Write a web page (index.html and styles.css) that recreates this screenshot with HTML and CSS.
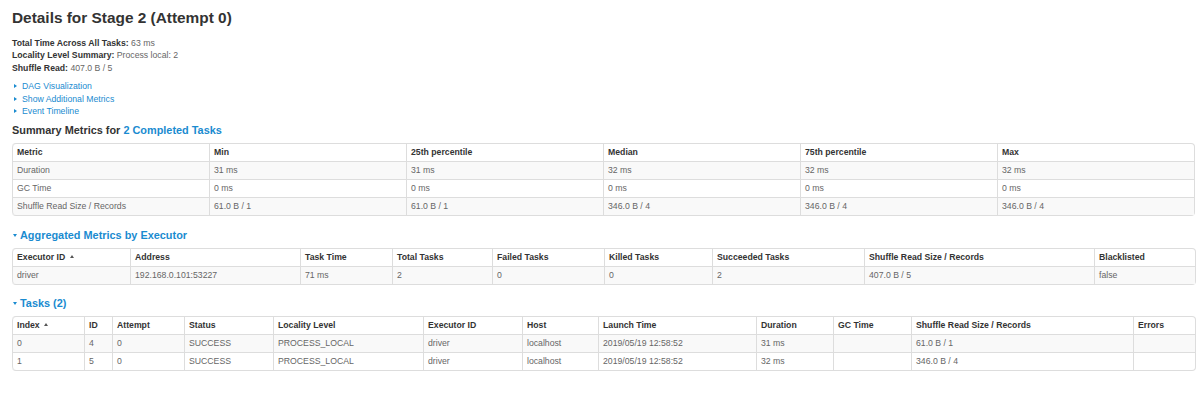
FILE: index.html
```html
<!DOCTYPE html>
<html>
	<head>
		<title>Details for Stage 2 (Attempt 0)</title>
		<link rel="stylesheet" href="styles.css">
	</head>
	<body>
		<div class="container">
			<h3 class="title">Details for Stage 2 (Attempt 0)</h3>
			<ul class="summary">
				<li><strong>Total Time Across All Tasks:</strong> 63 ms</li>
				<li><strong>Locality Level Summary:</strong> Process local: 2</li>
				<li><strong>Shuffle Read:</strong> 407.0 B / 5</li>
			</ul>
			<ul class="toggles">
				<li><span class="arrow-right"></span><a href="javascript:void(0);">DAG Visualization</a></li>
				<li><span class="arrow-right"></span><a href="javascript:void(0);">Show Additional Metrics</a></li>
				<li><span class="arrow-right"></span><a href="javascript:void(0);">Event Timeline</a></li>
			</ul>

			<h4 class="first">Summary Metrics for <a href="javascript:void(0);">2 Completed Tasks</a></h4>
			<table class="table metrics">
				<thead>
					<tr><th>Metric</th><th>Min</th><th>25th percentile</th><th>Median</th><th>75th percentile</th><th>Max</th></tr>
				</thead>
				<tbody>
					<tr><td>Duration</td><td>31 ms</td><td>31 ms</td><td>32 ms</td><td>32 ms</td><td>32 ms</td></tr>
					<tr><td>GC Time</td><td>0 ms</td><td>0 ms</td><td>0 ms</td><td>0 ms</td><td>0 ms</td></tr>
					<tr><td>Shuffle Read Size / Records</td><td>61.0 B / 1</td><td>61.0 B / 1</td><td>346.0 B / 4</td><td>346.0 B / 4</td><td>346.0 B / 4</td></tr>
				</tbody>
			</table>

			<h4 class="collapse agg"><span class="arrow-down"></span><a href="javascript:void(0);">Aggregated Metrics by Executor</a></h4>
			<table class="table executors">
				<colgroup>
					<col class="c118"><col class="c170"><col class="c92"><col class="c100"><col class="c112"><col class="c108"><col class="c152"><col class="c230"><col class="c101">
				</colgroup>
				<thead>
					<tr><th>Executor ID <span class="sort"></span></th><th>Address</th><th>Task Time</th><th>Total Tasks</th><th>Failed Tasks</th><th>Killed Tasks</th><th>Succeeded Tasks</th><th>Shuffle Read Size / Records</th><th>Blacklisted</th></tr>
				</thead>
				<tbody>
					<tr><td>driver</td><td>192.168.0.101:53227</td><td>71 ms</td><td>2</td><td>0</td><td>0</td><td>2</td><td>407.0 B / 5</td><td>false</td></tr>
				</tbody>
			</table>

			<h4 class="collapse tasks-head"><span class="arrow-down"></span><a href="javascript:void(0);">Tasks (2)</a></h4>
			<table class="table tasks">
				<colgroup>
					<col class="c72"><col class="c28"><col class="c72"><col class="c89"><col class="c150"><col class="c99"><col class="c76"><col class="c158"><col class="c77"><col class="c78"><col class="c222"><col class="c62">
				</colgroup>
				<thead>
					<tr><th>Index <span class="sort"></span></th><th>ID</th><th>Attempt</th><th>Status</th><th>Locality Level</th><th>Executor ID</th><th>Host</th><th>Launch Time</th><th>Duration</th><th>GC Time</th><th>Shuffle Read Size / Records</th><th>Errors</th></tr>
				</thead>
				<tbody>
					<tr><td>0</td><td>4</td><td>0</td><td>SUCCESS</td><td>PROCESS_LOCAL</td><td>driver</td><td>localhost</td><td>2019/05/19 12:58:52</td><td>31 ms</td><td></td><td>61.0 B / 1</td><td></td></tr>
					<tr><td>1</td><td>5</td><td>0</td><td>SUCCESS</td><td>PROCESS_LOCAL</td><td>driver</td><td>localhost</td><td>2019/05/19 12:58:52</td><td>32 ms</td><td></td><td>346.0 B / 4</td><td></td></tr>
				</tbody>
			</table>
		</div>
	</body>
</html>
```

FILE: styles.css
```css
* {
	margin: 0;
	padding: 0;
	box-sizing: border-box;
}
body {
	background: #ffffff;
	font-family: "Liberation Sans", Arial, sans-serif;
	font-size: 8.7px;
	line-height: 12.5px;
	color: #666666;
}
a {
	color: #1a8bd0;
	text-decoration: none;
}
.container {
	padding: 0 5px 0 12px;
}
h3.title {
	margin-top: 8px;
	font-size: 15.4px;
	line-height: 20px;
	font-weight: bold;
	color: #333333;
}
ul {
	list-style: none;
}
ul.summary {
	margin-top: 8.5px;
}
ul.summary strong {
	color: #333333;
}
ul.toggles {
	margin-top: 6px;
}
ul.toggles li {
	display: flex;
	align-items: center;
	height: 12.5px;
}
.arrow-right {
	display: inline-block;
	width: 0;
	height: 0;
	margin: 0 5px 0 2px;
	border-top: 2.5px solid transparent;
	border-bottom: 2.5px solid transparent;
	border-left: 3px solid #1a8bd0;
}
.arrow-down {
	display: inline-block;
	width: 0;
	height: 0;
	margin: 0 3px 0 1px;
	border-left: 2.5px solid transparent;
	border-right: 2.5px solid transparent;
	border-top: 3px solid #1a8bd0;
}
h4 {
	font-size: 10.9px;
	line-height: 14px;
	font-weight: bold;
	color: #333333;
}
h4.collapse {
	display: flex;
	align-items: center;
	height: 14px;
}
h4.first {
	margin-top: 5px;
}
h4.agg {
	margin-top: 12px;
}
h4.tasks-head {
	margin-top: 11.3px;
}
.table {
	width: 100%;
	table-layout: fixed;
	border-collapse: separate;
	border-spacing: 0;
	border: 1px solid #dddddd;
	border-left: 0;
	border-radius: 4px;
	margin-top: 6px;
	font-size: 8.7px;
}
.table.metrics {
	margin-top: 6.5px;
}
.table th, .table td {
	text-align: left;
	vertical-align: top;
	padding: 3px 4px;
	height: 18px;
	line-height: 11px;
	border-left: 1px solid #dddddd;
	border-top: 1px solid #dddddd;
	white-space: nowrap;
	overflow: hidden;
}
.table thead tr:first-child th {
	border-top: 0;
	height: 17px;
}
.table th {
	color: #333333;
	font-weight: bold;
}
.table tbody tr:nth-child(odd) td {
	background-color: #f9f9f9;
}
.table thead tr:first-child th:first-child {
	border-top-left-radius: 4px;
}
.table tbody tr:last-child td:first-child {
	border-bottom-left-radius: 4px;
}
.sort {
	display: inline-block;
	width: 0;
	height: 0;
	margin-left: 2px;
	vertical-align: 2px;
	border-left: 2px solid transparent;
	border-right: 2px solid transparent;
	border-bottom: 3px solid #555555;
}
col.c28 { width: 28px; }
col.c62 { width: 62px; }
col.c72 { width: 72px; }
col.c76 { width: 76px; }
col.c77 { width: 77px; }
col.c78 { width: 78px; }
col.c89 { width: 89px; }
col.c92 { width: 92px; }
col.c99 { width: 99px; }
col.c100 { width: 100px; }
col.c101 { width: 101px; }
col.c108 { width: 108px; }
col.c112 { width: 112px; }
col.c118 { width: 118px; }
col.c150 { width: 150px; }
col.c152 { width: 152px; }
col.c158 { width: 158px; }
col.c170 { width: 170px; }
col.c222 { width: 222px; }
col.c230 { width: 230px; }
```
